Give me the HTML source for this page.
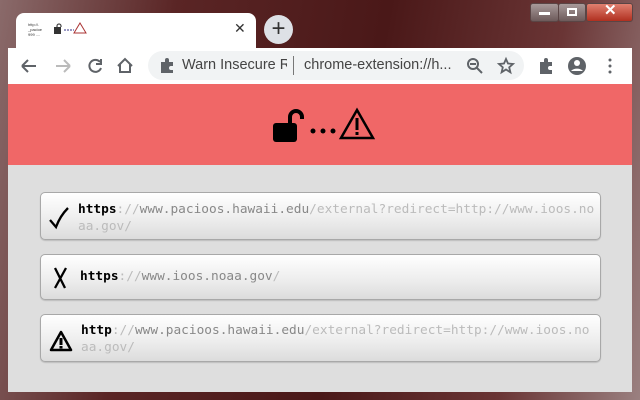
<!DOCTYPE html><html><head><style>
*{margin:0;padding:0;box-sizing:border-box}
body{width:640px;height:400px;overflow:hidden;background:linear-gradient(100deg,#8a6a6a 0%,#5a2525 25%,#4a1818 55%,#6a3535 80%,#9a8080 100%);font-family:"Liberation Sans",sans-serif;position:relative}
.abs{position:absolute}
.tab{left:16px;top:13px;width:240px;height:36px;background:#fff;border-radius:8px 8px 0 0}
.tb{left:8px;top:48px;width:624px;height:36px;background:#fff}
.omni{left:148px;top:51px;width:376px;height:29px;background:#f1f3f4;border-radius:15px}
.banner{left:8px;top:84px;width:624px;height:81px;background:#f06767}
.main{left:8px;top:165px;width:624px;height:227px;background:#dedede}
.box{position:absolute;left:40px;width:561px;background:linear-gradient(#fff,#ececec 60%,#dcdcdc);border:1px solid #a8a8a8;border-radius:5px;box-shadow:0 1px 1px rgba(0,0,0,.15);font-family:"DejaVu Sans Mono","Liberation Mono",monospace;font-size:12.8px;line-height:17px;color:#bbb}
.box .t{position:absolute;left:37px;top:7px;width:518px;word-break:break-all}
b{color:#000;font-weight:bold}
i{font-style:normal;color:#888}
.ic{position:absolute}
.wb{top:3px;height:19px;border:1px solid #5a4545;border-radius:3px;background:linear-gradient(#a89a9a,#6d5a5a)}
</style></head><body>
<div class="abs wb" style="left:530px;width:29px"></div>
<div class="abs wb" style="left:558px;width:28px"></div>
<div class="abs wb" style="left:586px;width:47px;background:linear-gradient(#e08070,#b03020)"></div>
<div class="abs" style="left:539px;top:12px;width:11px;height:3px;background:#fff"></div>
<div class="abs" style="left:567px;top:8px;width:10px;height:8px;border:2px solid #fff"></div>
<div class="abs" style="left:604px;top:1px;color:#fff;font-size:15px;font-weight:bold">✕</div>
<div class="abs tab"></div>
<div class="abs" style="left:28px;top:22px;font-size:4px;line-height:5px;color:#333">http://.<br>_pacioe<br>999 ....</div>
<svg class="abs" style="left:53px;top:22px" width="34" height="12">
<path d="M4 6v-2a2 2 0 0 1 4 0v1" stroke="#444" stroke-width="1.2" fill="none"/><rect x="1" y="5" width="7" height="7" fill="#333"/>
<path d="M11 8h10" stroke="#338" stroke-dasharray="2 1"/>
<path d="M27 1l6 10h-12z" fill="none" stroke="#a33"/></svg>
<div class="abs" style="left:234px;top:20px;font-size:14px;color:#333">✕</div>
<div class="abs" style="left:264px;top:15px;width:29px;height:29px;border-radius:50%;background:#dee1e6;text-align:center;font-size:24px;line-height:28px;color:#333">+</div>
<div class="abs tb"></div>
<svg class="abs" style="left:18px;top:54px" width="120" height="24" fill="none" stroke-width="2">
<path d="M4 12h14M4 12l6-6M4 12l6 6" stroke="#5f6368"/>
<path d="M38 12h14M52 12l-6-6M52 12l-6 6" stroke="#bbb"/>
<path d="M82 8a6 6 0 1 0 1 6M83 5v5h-5" stroke="#5f6368"/>
<path d="M100 12l7-7 7 7M102 10v8h10v-8" stroke="#5f6368"/>
</svg>
<div class="abs omni"></div>
<svg class="abs" style="left:159px;top:57px" width="16" height="16"><path d="M2 5h4v-2a2 2 0 0 1 4 0v2h4v4h-2a2 2 0 0 0 0 4h2v3h-12z" fill="#5f6368"/></svg>
<div class="abs" style="left:182px;top:57px;font-size:14.5px;color:#444;width:105px;overflow:hidden;white-space:nowrap">Warn Insecure Re</div>
<div class="abs" style="left:293px;top:56px;width:1px;height:19px;background:#777"></div>
<div class="abs" style="left:304px;top:57px;font-size:14.5px;color:#444">chrome-extension://h...</div>
<svg class="abs" style="left:464px;top:54px" width="160" height="24" fill="none" stroke="#5f6368" stroke-width="2">
<circle cx="9" cy="10" r="5"/><path d="M13 14l5 5M6 10h6"/>
<path d="M42 5l2 4.5 5 .5-3.8 3.3 1.2 5-4.4-2.8-4.4 2.8 1.2-5-3.8-3.3 5-.5z" stroke-width="1.8"/>
<path d="M76 8h4v-2a2 2 0 0 1 4 0v2h4v4h-2a2 2 0 0 0 0 4h2v4h-12z" fill="#5f6368" stroke="none"/>
<circle cx="113" cy="12" r="9" fill="#5f6368" stroke="none"/><circle cx="113" cy="9" r="3" fill="#fff" stroke="none"/><path d="M107 17a7 5 0 0 1 12 0" fill="#fff" stroke="none"/>
<circle cx="146" cy="6" r="1.5" fill="#5f6368" stroke="none"/><circle cx="146" cy="12" r="1.5" fill="#5f6368" stroke="none"/><circle cx="146" cy="18" r="1.5" fill="#5f6368" stroke="none"/>
</svg>
<div class="abs banner"></div>
<svg class="abs" style="left:270px;top:104px" width="106" height="40">
<path d="M20 20v-7a6 6 0 0 1 12 0v2" stroke="#000" stroke-width="4" fill="none"/>
<rect x="3" y="19" width="24" height="19" rx="3"/>
<circle cx="43" cy="27" r="2.5"/><circle cx="53" cy="27" r="2.5"/><circle cx="63" cy="27" r="2.5"/>
<path d="M87 6l16 28h-32z" fill="none" stroke="#000" stroke-width="2.5"/>
<rect x="85.5" y="14" width="3" height="12"/><rect x="85.5" y="28" width="3" height="3"/>
</svg>
<div class="abs main"></div>
<div class="box" style="top:192px;height:48px">
<svg class="ic" style="left:7px;top:14px" width="22" height="24"><path d="M2 13l6 7c3-8 7-14 12-19" fill="none" stroke="#000" stroke-width="2.3"/></svg>
<div class="t" style="left:37px;top:8px"><b>https</b>://<i>www.pacioos.hawaii.edu</i>/external?redirect=http://www.ioos.noaa.gov/</div></div>
<div class="box" style="top:254px;height:46px">
<svg class="ic" style="left:11px;top:11px" width="18" height="24"><path d="M3 2l10 20M14 2l-11 20" fill="none" stroke="#000" stroke-width="2.3"/></svg>
<div class="t" style="left:39px;top:13px"><b>https</b>://<i>www.ioos.noaa.gov</i>/</div></div>
<div class="box" style="top:314px;height:48px">
<svg class="ic" style="left:8px;top:15px" width="24" height="22"><path d="M12 2l10 18h-20z" fill="none" stroke="#000" stroke-width="2.5" stroke-linejoin="round"/><rect x="10.5" y="8" width="3" height="7"/><rect x="10.5" y="16" width="3" height="2.5"/></svg>
<div class="t" style="left:40px;top:7px;width:512px"><b>http</b>://<i>www.pacioos.hawaii.edu</i>/external?redirect=http://www.ioos.noaa.gov/</div></div>
</body></html>
